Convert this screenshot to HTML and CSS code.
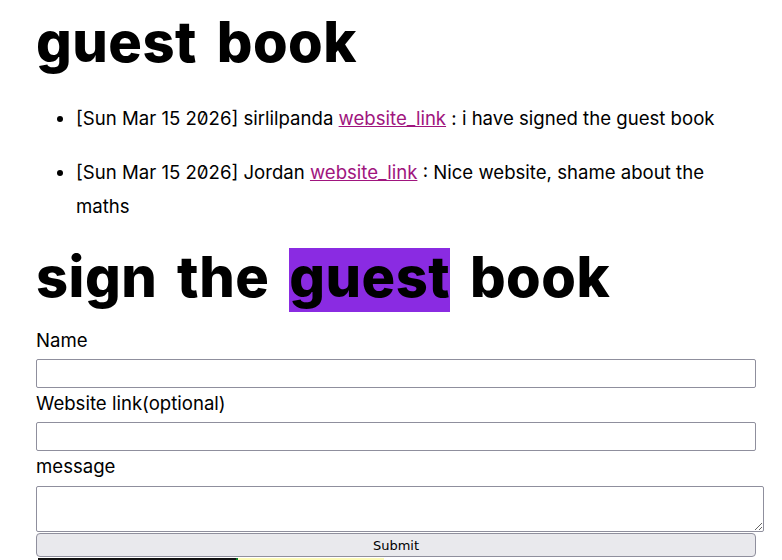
FILE: index.html
```html
<!DOCTYPE html>
<html lang="en">
<head>
    <meta charset="UTF-8">
    <title>guest book</title>
    <link rel="stylesheet" href="styles.css">
</head>
<body>
    <div class="page">
        <h1 class="title">guest book</h1>
        <ul class="entries">
            <li>[Sun Mar 15 2026] sirlilpanda <a href="#">website_link</a> : i have signed the guest book</li>
            <li>[Sun Mar 15 2026] Jordan <a href="#">website_link</a> : Nice website, shame about the maths</li>
        </ul>
        <h1 class="title">sign the <span class="hl">guest</span> book</h1>
        <form class="sign-form">
            <label for="name">Name</label>
            <input type="text" id="name">
            <label for="link">Website link(optional)</label>
            <input type="text" id="link">
            <label for="msg">message</label>
            <textarea id="msg"></textarea>
            <button type="button">Submit</button>
        </form>
        <div class="badge">
            <div class="badge-dark"></div>
            <div class="badge-green"></div>
            <div class="badge-yellow"></div>
        </div>
    </div>
</body>
</html>
```

FILE: styles.css
```css
body {
    margin: 0;
    background: #fff;
    color: #000;
    font-family: Inter, "Noto Sans", sans-serif;
    font-feature-settings: "zero";
}
.page {
    width: 720px;
    margin-left: 36px;
}
.title {
    font-size: 56px;
    font-weight: 800;
    line-height: 64px;
    letter-spacing: 0.5px;
    word-spacing: 7px;
    margin: 10px 0 0 0;
}
.hl {
    display: inline-block;
    line-height: 58px;
    padding-bottom: 6px;
    background-color: #8a2be2;
    word-spacing: 0;
}
.entries {
    margin: 27px 0 22px 0;
    padding-left: 40px;
    font-size: 18.6px;
    line-height: 34px;
}
.entries li {
    margin-bottom: 20px;
}
.entries a {
    color: #a0157e;
}
.sign-form {
    display: flex;
    flex-direction: column;
    align-items: flex-start;
    margin-top: 15px;
}
.sign-form label {
    font-size: 18.6px;
    line-height: 26px;
    margin-bottom: 6px;
}
.sign-form input,
.sign-form textarea {
    box-sizing: border-box;
    width: 720px;
    height: 29px;
    border: 1px solid #8f8f9d;
    border-radius: 2px;
    background: #fff;
    margin: 0 0 2px 0;
}
.sign-form textarea {
    width: 728px;
    height: 46px;
    margin: 1px 0 1px 0;
}
.sign-form button {
    width: 720px;
    height: 24px;
    border: 1px solid #8f8f9d;
    border-radius: 4px;
    background: #e9e9ed;
    font-family: "DejaVu Sans", sans-serif;
    font-size: 13px;
    color: #000;
}
.badge {
    display: flex;
    margin-top: 1px;
    height: 31px;
}
.badge-dark {
    width: 198px;
    margin-left: 2px;
    background: #111;
}
.badge-green {
    width: 2px;
    background: #0b7a2a;
}
.badge-yellow {
    width: 146px;
    background: #fdfbb8;
}
```
